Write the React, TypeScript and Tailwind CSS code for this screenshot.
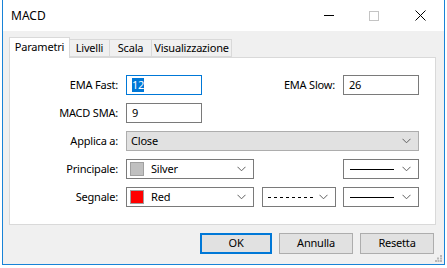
import React from "react";

// chevron used by every combo box
function Chevron() {
  return (
    <svg width="9" height="6" viewBox="0 0 9 6" className="shrink-0">
      <path d="M0.5 0.8 L4.5 4.8 L8.5 0.8" fill="none" stroke="#606060" strokeWidth="1" />
    </svg>
  );
}

function Combo({ className, children }: { className: string; children?: React.ReactNode }) {
  return (
    <div className={`h-[20px] border border-[#7a7a7a] bg-white flex items-center pr-[7px] ${className}`}>
      <div className="flex-1 flex items-center min-w-0">{children}</div>
      <Chevron />
    </div>
  );
}

function Label({ text, className = "" }: { text: string; className?: string }) {
  return <div className={`text-right pr-[8px] ${className}`}>{text}</div>;
}

function SolidLine() {
  return <div className="w-[44px] h-px bg-black ml-[6px]" />;
}

export default function App() {
  const tabs = ["Livelli", "Scala", "Visualizzazione"];

  return (
    <div
      className="w-[447px] h-[268px] bg-white overflow-hidden text-[11px] tracking-[-0.2px] text-black"
      style={{ fontFamily: '"Noto Sans", "Open Sans", sans-serif' }}
    >
      <div className="ml-[2px] w-[443px] h-[265px] border-x border-b border-[#1883d7] bg-[#f0f0f0] flex flex-col">
        {/* === Title bar === */}
        <div className="h-[31px] bg-white flex items-center pl-[8px]">
          <span className="text-[12px] tracking-normal flex-1">MACD</span>
          <div className="w-[10px] h-px bg-black mr-[35px]" />
          <div className="w-[10px] h-[10px] border border-[#c4c4c4] mr-[36px]" />
          <svg width="11" height="11" viewBox="0 0 11 11" className="mr-[18px]">
            <path d="M0.5 0.5 L10.5 10.5 M10.5 0.5 L0.5 10.5" stroke="#000" strokeWidth="1" />
          </svg>
        </div>

        {/* === Tabs === */}
        <div className="pl-[6px] pt-[7px] flex items-end h-[27px] relative z-10">
          <div className="w-[61px] h-[21px] bg-white border border-b-0 border-[#d9d9d9] flex items-center justify-center pb-[1px]">
            Parametri
          </div>
          {tabs.map((t) => (
            <div
              key={t}
              className={`h-[18px] mb-px bg-[#f0f0f0] border border-l-0 border-[#d9d9d9] flex items-center justify-center ${
                t === "Livelli" ? "w-[40px]" : t === "Scala" ? "w-[42px]" : "w-[80px]"
              }`}
            >
              {t}
            </div>
          ))}
        </div>

        {/* === Panel === */}
        <div className="ml-[6px] w-[427px] h-[168px] -mt-px bg-white border border-[#d9d9d9] pt-[17px] flex flex-col gap-[8px]">
          <div className="flex items-center h-[20px]">
            <Label text="EMA Fast:" className="w-[116px]" />
            <div className="w-[76px] h-[20px] border border-[#0078d7] flex items-center pl-[5px]">
              <span className="bg-[#0078d7] text-white leading-[14px]">12</span>
            </div>
            <Label text="EMA Slow:" className="w-[141px]" />
            <div className="w-[76px] h-[20px] border border-[#7a7a7a] flex items-center pl-[5px]">26</div>
          </div>

          <div className="flex items-center h-[20px]">
            <Label text="MACD SMA:" className="w-[116px]" />
            <div className="w-[76px] h-[20px] border border-[#7a7a7a] flex items-center pl-[5px]">9</div>
          </div>

          <div className="flex items-center h-[20px]">
            <Label text="Applica a:" className="w-[116px]" />
            <div className="w-[293px] h-[20px] border border-[#adadad] bg-[#e1e1e1] flex items-center pl-[4px] pr-[7px]">
              <span className="flex-1">Close</span>
              <Chevron />
            </div>
          </div>

          <div className="flex items-center h-[20px]">
            <Label text="Principale:" className="w-[116px]" />
            <Combo className="w-[128px]">
              <div className="w-[14px] h-[14px] bg-[#c0c0c0] border border-[#a0a0a0] ml-[3px] mr-[7px]" />
              <span>Silver</span>
            </Combo>
            <div className="w-[89px]" />
            <Combo className="w-[76px]">
              <SolidLine />
            </Combo>
          </div>

          <div className="flex items-center h-[20px]">
            <Label text="Segnale:" className="w-[116px]" />
            <Combo className="w-[128px]">
              <div className="w-[14px] h-[14px] bg-[#ff0000] border border-[#a0a0a0] ml-[3px] mr-[7px]" />
              <span>Red</span>
            </Combo>
            <div className="w-[8px]" />
            <Combo className="w-[74px]">
              <svg width="46" height="1" className="ml-[5px]">
                <line x1="0" y1="0.5" x2="46" y2="0.5" stroke="#000" strokeWidth="1" strokeDasharray="3 3" />
              </svg>
            </Combo>
            <div className="w-[7px]" />
            <Combo className="w-[76px]">
              <SolidLine />
            </Combo>
          </div>
        </div>

        {/* === Buttons === */}
        <div className="flex items-start pl-[197px] pt-[8px] gap-[7px] relative flex-1">
          <div className="w-[72px] h-[21px] border-2 border-[#0078d7] bg-[#e1e1e1] flex items-center justify-center">OK</div>
          <div className="w-[74px] h-[21px] border border-[#adadad] bg-[#e1e1e1] flex items-center justify-center">Annulla</div>
          <div className="w-[74px] h-[21px] border border-[#adadad] bg-[#e1e1e1] flex items-center justify-center">Resetta</div>
          <svg width="7" height="7" viewBox="0 0 7 7" className="absolute right-[2px] bottom-[2px]">
            <g fill="#b8b8b8">
              <rect x="5" y="0" width="2" height="2" />
              <rect x="2" y="2.5" width="2" height="2" />
              <rect x="5" y="2.5" width="2" height="2" />
              <rect x="0" y="5" width="2" height="2" />
              <rect x="2.5" y="5" width="2" height="2" />
              <rect x="5" y="5" width="2" height="2" />
            </g>
          </svg>
        </div>
      </div>
    </div>
  );
}
